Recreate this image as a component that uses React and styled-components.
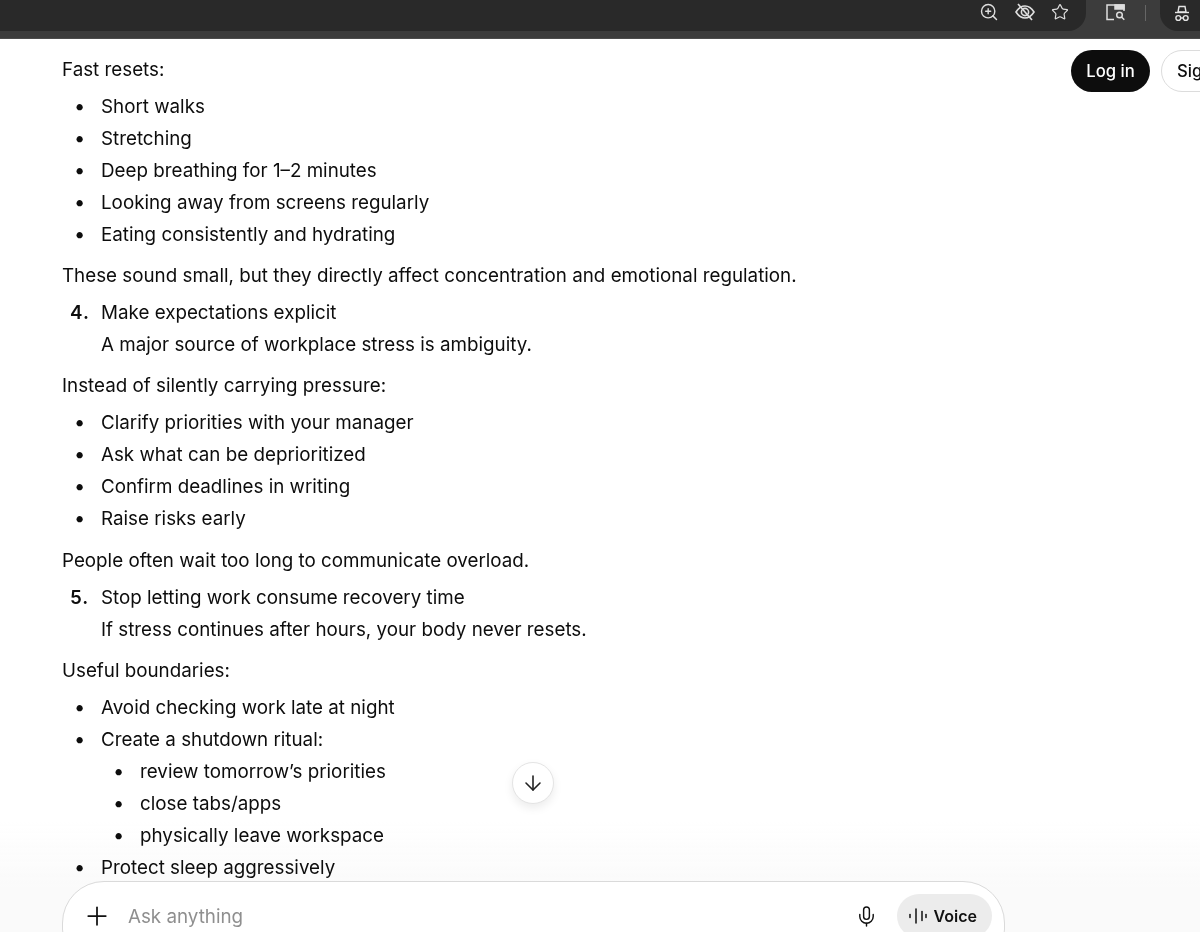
import React from 'react';
import styled, { createGlobalStyle } from 'styled-components';
import { Plus, ArrowDown, Mic, ZoomIn, Star } from 'lucide-react';

const Global = createGlobalStyle`
  html, body {
    margin: 0;
    padding: 0;
    background: #fff;
  }
  * {
    box-sizing: border-box;
  }
`;

export default function App() {
  return (
    <Page>
      <Global />
      <BrowserBar>
        <UrlPill>
          <ToolIcon><ZoomIn size={20} strokeWidth={1.7} /></ToolIcon>
          <ToolIcon>
            <svg width="22" height="20" viewBox="0 0 22 20" fill="none" stroke="currentColor" strokeWidth="1.6">
              <path d="M2 10c2.5-4 5.5-6 9-6s6.500 2 9 6c-2.500 4-5.500 6-9 6s-6.500-2-9-6z" />
              <circle cx="11" cy="10" r="3.600" />
              <path d="M4 2l14 16" />
            </svg>
          </ToolIcon>
          <ToolIcon><Star size={18} strokeWidth={1.6} /></ToolIcon>
        </UrlPill>
        <WindowIcon>
          <svg width="20" height="17" viewBox="0 0 20 17" fill="none" stroke="currentColor" strokeWidth="1.500">
            <path d="M8 15.500H1V1h17v6" />
            <path d="M9 1h9v4H9z" fill="currentColor" />
            <circle cx="13.500" cy="11" r="2.800" />
            <path d="M15.500 13l2.800 2.800" />
          </svg>
        </WindowIcon>
        <BarDivider />
        <ProfilePill>
          <svg width="16" height="17" viewBox="0 0 16 17" fill="none" stroke="currentColor" strokeWidth="1.400">
            <path d="M4 7l1-5.500h6L12 7z" />
            <path d="M1 7.500h14" />
            <circle cx="4.300" cy="13" r="2.400" />
            <circle cx="11.700" cy="13" r="2.400" />
            <path d="M6.700 13h2.600" />
          </svg>
        </ProfilePill>
      </BrowserBar>

      <Chat>
        <Para>Fast resets:</Para>
        <List>
          <li>Short walks</li>
          <li>Stretching</li>
          <li>Deep breathing for 1–2 minutes</li>
          <li>Looking away from screens regularly</li>
          <li>Eating consistently and hydrating</li>
        </List>
        <Para>These sound small, but they directly affect concentration and emotional regulation.</Para>
        <Numbered start={4}>
          <li>
            Make expectations explicit
            <br />
            A major source of workplace stress is ambiguity.
          </li>
        </Numbered>
        <Para>Instead of silently carrying pressure:</Para>
        <List>
          <li>Clarify priorities with your manager</li>
          <li>Ask what can be deprioritized</li>
          <li>Confirm deadlines in writing</li>
          <li>Raise risks early</li>
        </List>
        <Para>People often wait too long to communicate overload.</Para>
        <Numbered start={5}>
          <li>
            Stop letting work consume recovery time
            <br />
            If stress continues after hours, your body never resets.
          </li>
        </Numbered>
        <Para>Useful boundaries:</Para>
        <List>
          <li>Avoid checking work late at night</li>
          <li>
            Create a shutdown ritual:
            <List>
              <li>review tomorrow’s priorities</li>
              <li>close tabs/apps</li>
              <li>physically leave workspace</li>
            </List>
          </li>
          <li>Protect sleep aggressively</li>
        </List>
      </Chat>

      <AuthButtons>
        <LoginButton>Log in</LoginButton>
        <SignupButton>Sign up for free</SignupButton>
      </AuthButtons>

      <ScrollDown>
        <ArrowDown size={24} strokeWidth={1.6} />
      </ScrollDown>

      <BottomFade />

      <Composer>
        <Plus size={30} strokeWidth={1.4} />
        <Prompt>Ask anything</Prompt>
        <Mic size={23} strokeWidth={1.5} />
        <VoiceButton>
          <svg width="20" height="20" viewBox="0 0 20 20" fill="none" stroke="currentColor" strokeWidth="1.5" strokeLinecap="round">
            <path d="M2 8.500v3" />
            <path d="M8 3v14" />
            <path d="M14 5.500v9" />
            <path d="M18 8.500v3" />
          </svg>
          Voice
        </VoiceButton>
      </Composer>
    </Page>
  );
}

const Page = styled.div`
  position: relative;
  width: 1200px;
  height: 932px;
  overflow: hidden;
  background: #fff;
  color: #0d0d0d;
  font-family: Inter, "Liberation Sans", sans-serif;
  font-size: 18.8px;
  line-height: 32px;
`;

const BrowserBar = styled.div`
  display: flex;
  align-items: flex-start;
  height: 39px;
  background: #3c3c3c;
  border-bottom: 1px solid #4c4c4c;
  color: #e4e4e4;
`;

const UrlPill = styled.div`
  flex: 1;
  display: flex;
  justify-content: flex-end;
  align-items: center;
  gap: 15px;
  height: 31px;
  padding: 0 17px 7px 0;
  background: #292929;
  border-radius: 0 0 18px 0;
`;

const ToolIcon = styled.span`
  display: flex;
  align-items: center;
  justify-content: center;
  height: 24px;
  color: #dedede;
  svg {
    display: block;
  }
`;

const WindowIcon = styled(ToolIcon)`
  margin: 0 0 0 20px;
`;

const BarDivider = styled.div`
  width: 1.500px;
  height: 16px;
  margin: 5px 14px 0 19px;
  background: #666;
`;

const ProfilePill = styled.div`
  width: 40px;
  height: 31px;
  padding: 5px 0 0 14px;
  background: #292929;
  border-radius: 0 0 0 18px;
  svg {
    display: block;
  }
`;

const Chat = styled.main`
  padding: 15px 0 0 62px;
  width: 900px;
`;

const Para = styled.p`
  margin: 9.2px 0 5px;
  &:first-child {
    margin-top: 0;
  }
`;

const List = styled.ul`
  margin: 0;
  padding: 0 0 0 39px;
  list-style: none;
  li::before {
    content: "•";
    display: inline-block;
    width: 27px;
    margin-left: -27px;
    font-size: 20px;
    line-height: 1;
  }
`;

const Numbered = styled.ol`
  margin: 0;
  padding: 0 0 0 39px;
  list-style: none;
  li::before {
    content: counter(list-item) ".";
    display: inline-block;
    width: 31px;
    margin-left: -31px;
    font-weight: 600;
    letter-spacing: 1px;
  }
`;

const AuthButtons = styled.div`
  position: absolute;
  top: 50px;
  left: 1071px;
  display: flex;
  gap: 11px;
  white-space: nowrap;
`;

const LoginButton = styled.button`
  height: 42px;
  width: 79px;
  padding: 0;
  border: 0;
  border-radius: 21px;
  background: #0d0d0d;
  color: #fff;
  font: 500 16.700px Inter, "Liberation Sans", sans-serif;
`;

const SignupButton = styled.button`
  height: 42px;
  padding: 0 15px;
  border: 1px solid #dcdcdc;
  border-radius: 21px;
  background: #fff;
  color: #0d0d0d;
  font: 500 16.700px Inter, "Liberation Sans", sans-serif;
`;

const ScrollDown = styled.div`
  position: absolute;
  top: 762px;
  left: 512px;
  display: flex;
  align-items: center;
  justify-content: center;
  width: 42px;
  height: 42px;
  border: 1px solid #e4e4e4;
  border-radius: 50%;
  background: #fff;
  box-shadow: 0 4px 10px rgba(0, 0, 0, 0.08);
  color: #222;
`;

const BottomFade = styled.div`
  position: absolute;
  left: 0;
  right: 0;
  bottom: 0;
  height: 110px;
  pointer-events: none;
  background: linear-gradient(to bottom, rgba(250, 250, 250, 0), #fafafa 60%);
  mix-blend-mode: multiply;
`;

const Composer = styled.div`
  position: absolute;
  top: 881px;
  left: 62px;
  display: flex;
  align-items: center;
  width: 943px;
  height: 90px;
  padding: 0 12px 20px 19px;
  border: 1px solid #dadada;
  border-radius: 42px;
  background: #fff;
  color: #111;
`;

const Prompt = styled.span`
  flex: 1;
  margin: 2px 0 0 16px;
  color: #8f8f8f;
`;

const VoiceButton = styled.div`
  display: flex;
  align-items: center;
  gap: 6px;
  height: 44px;
  margin-left: 19px;
  padding: 0 15px 0 11px;
  border-radius: 22px;
  background: #ececec;
  font-size: 16px;
  font-weight: 600;
`;
